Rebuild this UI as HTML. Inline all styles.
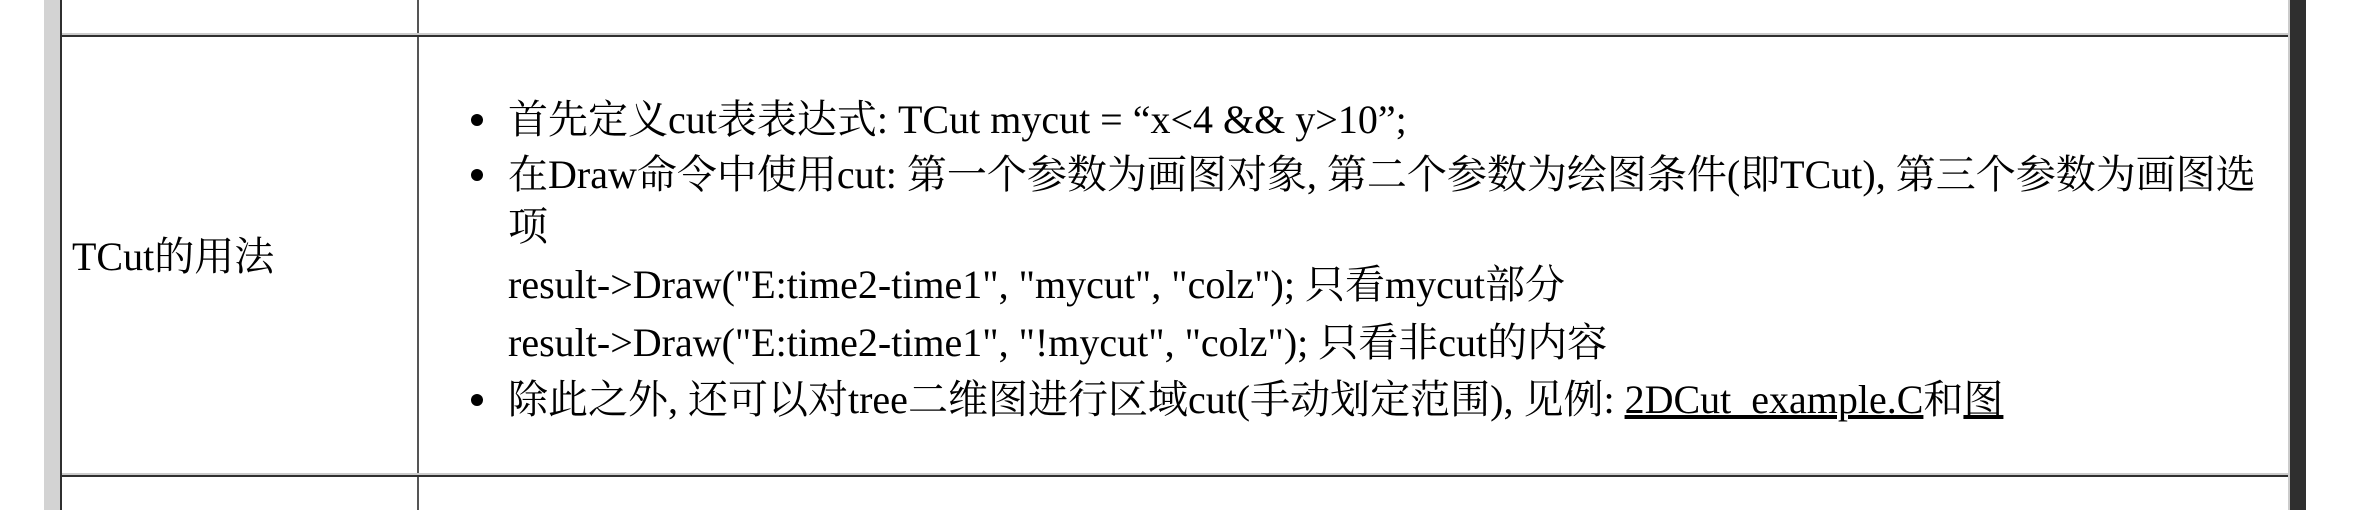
<!DOCTYPE html>
<html><head><meta charset="utf-8"><style>
html,body{margin:0;padding:0;background:#fff;width:2366px;height:510px;overflow:hidden;position:relative}
div{position:absolute}
.t{font-family:"Liberation Serif","Noto Serif CJK SC",serif;font-size:40px;line-height:58px;white-space:nowrap;color:#000}
.b{width:12px;height:12px;border-radius:50%;background:#000}
a{color:#000;text-decoration:underline}
</style></head><body>
<div style="left:44px;top:0;width:16px;height:510px;background:#d3d3d3"></div>
<div style="left:60px;top:0;width:2px;height:510px;background:#2f2f2f"></div>
<div style="left:417px;top:0;width:2px;height:510px;background:#555"></div>
<div style="left:2288px;top:0;width:2px;height:510px;background:#ccc"></div>
<div style="left:2290px;top:0;width:16px;height:510px;background:#2f2f2f"></div>
<div style="left:62px;top:33px;width:2226px;height:2px;background:#ccc"></div>
<div style="left:62px;top:35px;width:2226px;height:2px;background:#2f2f2f"></div>
<div style="left:62px;top:473px;width:2226px;height:2px;background:#ccc"></div>
<div style="left:62px;top:475px;width:2226px;height:2px;background:#2f2f2f"></div>
<div class="t" style="left:72px;top:228px">TCut的用法</div>
<div class="b" style="left:471px;top:114px"></div>
<div class="b" style="left:471px;top:169px"></div>
<div class="b" style="left:471px;top:394px"></div>
<div class="t" style="left:508px;top:91px">首先定义cut表表达式: TCut mycut = “x&lt;4 &amp;&amp; y&gt;10”;</div>
<div class="t" style="left:508px;top:146px">在Draw命令中使用cut: 第一个参数为画图对象, 第二个参数为绘图条件(即TCut), 第三个参数为画图选</div>
<div class="t" style="left:508px;top:198px">项</div>
<div class="t" style="left:508px;top:256px">result-&gt;Draw("E:time2-time1", "mycut", "colz"); 只看mycut部分</div>
<div class="t" style="left:508px;top:314px">result-&gt;Draw("E:time2-time1", "!mycut", "colz"); 只看非cut的内容</div>
<div class="t" style="left:508px;top:371px">除此之外, 还可以对tree二维图进行区域cut(手动划定范围), 见例: <a>2DCut_example.C</a>和<a>图</a></div>
</body></html>
